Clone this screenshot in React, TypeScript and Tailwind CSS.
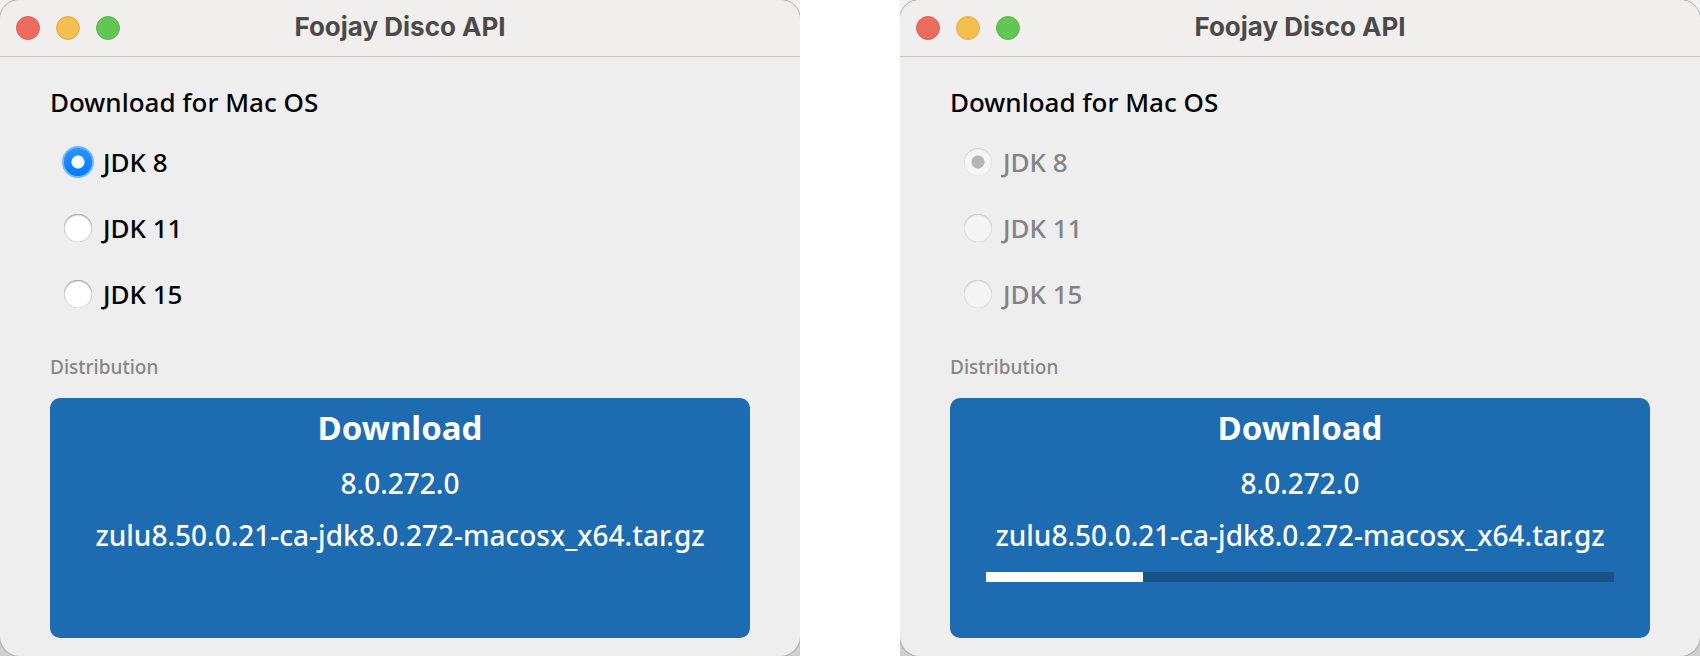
import React from "react";

const versions = ["8", "11", "15"];

const radio =
  "size-7 shrink-0 appearance-none rounded-full bg-white shadow-[inset_0_1px_2px_#00000060,inset_0_0_1px_#00000060] " +
  "checked:bg-[radial-gradient(circle,#fff_0_6px,transparent_7px),linear-gradient(#2e94ff,#007aff)] checked:shadow-[0_0_1px_2px_#6fb3fb] " +
  "disabled:bg-[#f4f4f4] disabled:shadow-[inset_0_1px_2px_#00000026,inset_0_0_1px_#00000040] " +
  "disabled:checked:bg-[radial-gradient(circle,#b5b5b5_0_6px,#f6f6f6_7px)] disabled:checked:shadow-[inset_0_1px_2px_#00000026,inset_0_0_1px_#00000040]";

type Props = { id: string; progress?: number };

function DiscoWindow({ id, progress }: Props) {
  const busy = progress !== undefined;
  return (
    <div className="min-w-0 flex-1 overflow-hidden bg-linear-to-b from-[#f2f2f2] to-[#cfcfcf]">
      <section className="flex flex-col overflow-hidden rounded-[20px] bg-[#eeeeee] shadow-[0_0_1px_1px_#a8a8a8]">
        <header className="relative flex h-[57px] items-center justify-center border-b border-[#c6c6c6] bg-[#f0efed]">
          <div className="absolute left-4 flex gap-4">
            <button type="button" aria-label="Close" className="size-6 rounded-full border border-[#dc6157] bg-[#ed6a5f]" />
            <button type="button" aria-label="Minimize" className="size-6 rounded-full border border-[#dfab49] bg-[#f5bf4f]" />
            <button type="button" aria-label="Zoom" className="size-6 rounded-full border border-[#5ab84c] bg-[#62c655]" />
          </div>
          <h1 className="pb-0.5 font-['Inter',sans-serif] text-[26px] leading-8 font-bold text-[#4b4a49]">Foojay Disco API</h1>
        </header>
        <div className="px-[50px] pt-[27px] pb-[18px]">
          <h2 className="text-[26px] leading-9 font-medium">Download for Mac OS</h2>
          <fieldset className="mt-[9px] ml-[14px]">
            {versions.map((v, i) => (
              <label
                key={v}
                htmlFor={id + v}
                className={"flex h-[66px] items-center gap-[11px] text-[26px] leading-9 font-medium " + (busy ? "text-[#838383]" : "text-black")}
              >
                <input id={id + v} type="radio" name={id} defaultChecked={i === 0} disabled={busy} className={radio} />
                JDK {v}
              </label>
            ))}
          </fieldset>
          <p className="mt-7 text-[19px] leading-6 font-medium text-[#868686]">Distribution</p>
          <button
            type="button"
            className="mt-[19px] flex h-[240px] w-full flex-col items-center rounded-[10px] bg-[#1d6bb1] px-9 pt-[7px] text-[28px] leading-9 font-medium text-white"
          >
            <span className="text-[33px] leading-[46px] font-bold">Download</span>
            <span className="mt-[14px]">8.0.272.0</span>
            <span className="mt-4 whitespace-nowrap">zulu8.50.0.21-ca-jdk8.0.272-macosx_x64.tar.gz</span>
            {busy && (
              <span role="progressbar" aria-label="Download" aria-valuenow={progress} className="mt-[19px] block h-[10px] w-full bg-[#185388]">
                <span className="block h-full bg-white" style={{ width: `${progress}%` }} />
              </span>
            )}
          </button>
        </div>
      </section>
    </div>
  );
}

export default function App() {
  return (
    <main className="flex gap-[100px] bg-white font-['Noto_Sans',sans-serif] text-black">
      <DiscoWindow id="idle" />
      <DiscoWindow id="busy" progress={25} />
    </main>
  );
}
